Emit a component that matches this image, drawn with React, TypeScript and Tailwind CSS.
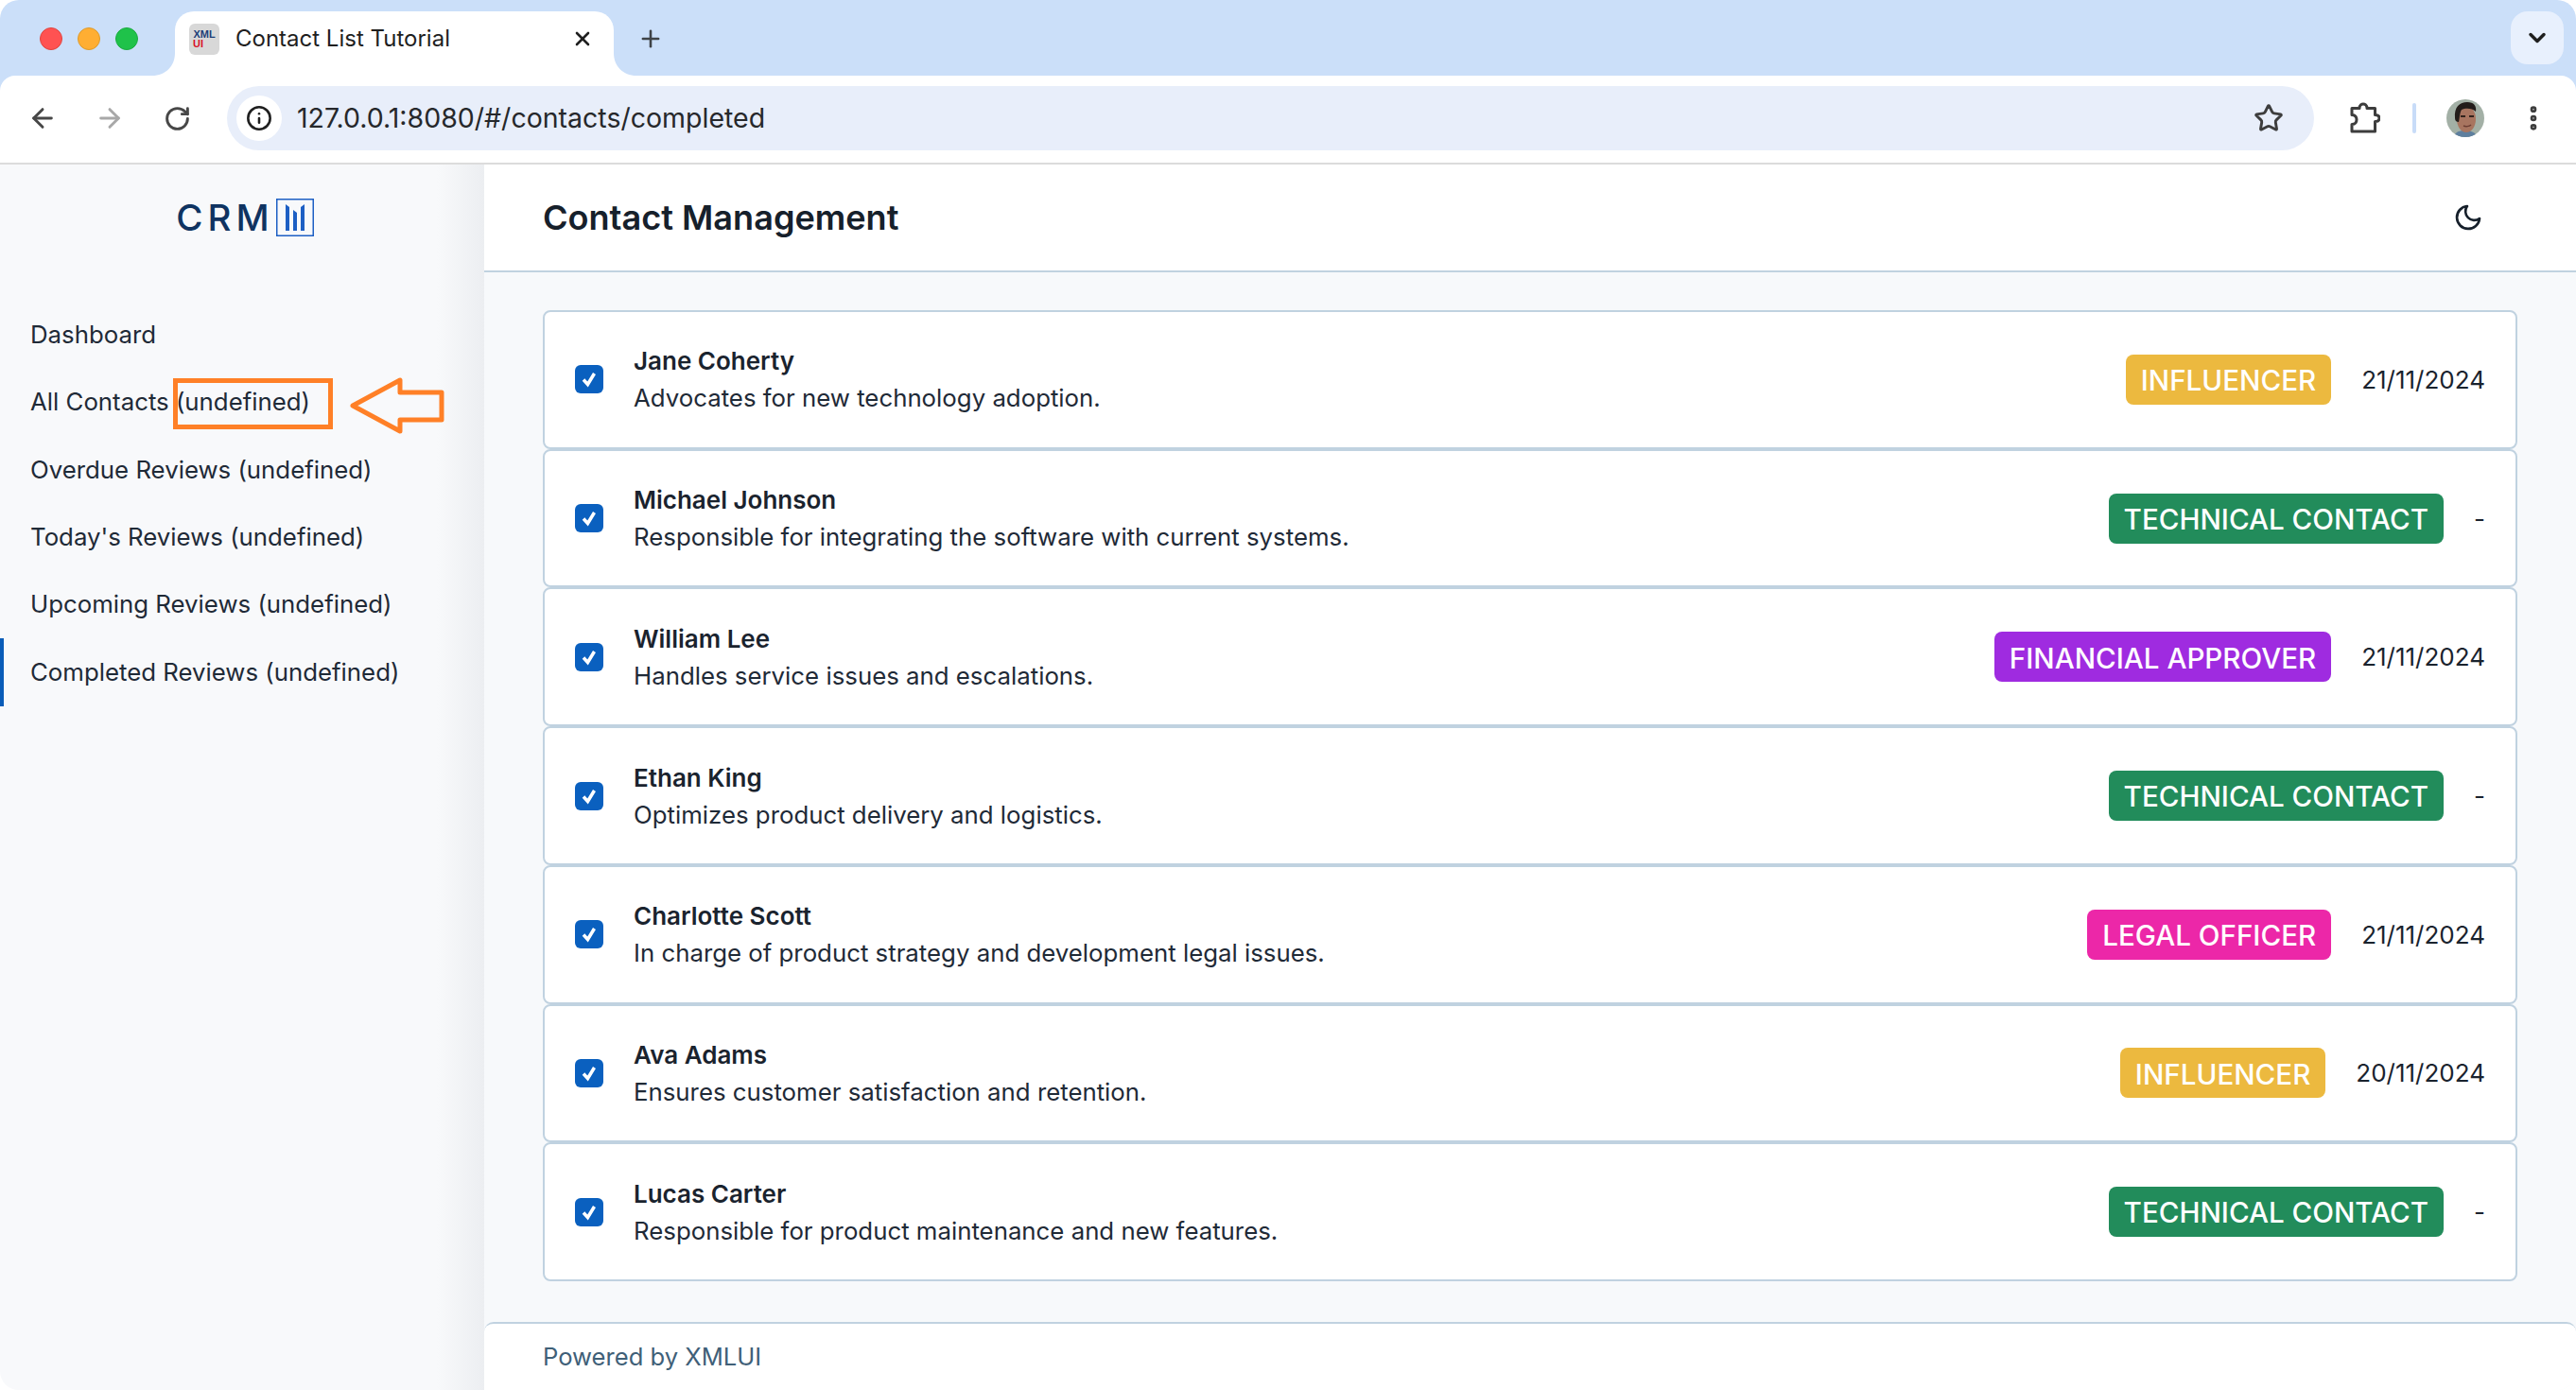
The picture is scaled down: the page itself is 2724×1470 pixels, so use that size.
import React from "react";
import { ArrowLeft, ArrowRight, RotateCw, Info, Star, EllipsisVertical, ChevronDown, X, Plus } from "lucide-react";

type Contact = {
  name: string;
  desc: string;
  tag: string;
  tagClass: string;
  date: string;
};

const contacts: Contact[] = [
  { name: "Jane Coherty", desc: "Advocates for new technology adoption.", tag: "INFLUENCER", tagClass: "bg-[#ecb93f]", date: "21/11/2024" },
  { name: "Michael Johnson", desc: "Responsible for integrating the software with current systems.", tag: "TECHNICAL CONTACT", tagClass: "bg-[#228c5b]", date: "-" },
  { name: "William Lee", desc: "Handles service issues and escalations.", tag: "FINANCIAL APPROVER", tagClass: "bg-[#9f2be0]", date: "21/11/2024" },
  { name: "Ethan King", desc: "Optimizes product delivery and logistics.", tag: "TECHNICAL CONTACT", tagClass: "bg-[#228c5b]", date: "-" },
  { name: "Charlotte Scott", desc: "In charge of product strategy and development legal issues.", tag: "LEGAL OFFICER", tagClass: "bg-[#ec27a8]", date: "21/11/2024" },
  { name: "Ava Adams", desc: "Ensures customer satisfaction and retention.", tag: "INFLUENCER", tagClass: "bg-[#ecb93f]", date: "20/11/2024" },
  { name: "Lucas Carter", desc: "Responsible for product maintenance and new features.", tag: "TECHNICAL CONTACT", tagClass: "bg-[#228c5b]", date: "-" },
];

const navItems = [
  "Dashboard",
  "All Contacts (undefined)",
  "Overdue Reviews (undefined)",
  "Today's Reviews (undefined)",
  "Upcoming Reviews (undefined)",
  "Completed Reviews (undefined)",
];

function BrowserChrome() {
  return (
    <div className="bg-[#cbdff9] rounded-t-[20px] shrink-0">
      {/* Tab strip */}
      <div className="h-[80px] flex items-start pl-[42px] pr-[13px]">
        <div className="flex gap-[16px] mt-[29px]">
          <div className="w-[24px] h-[24px] rounded-full bg-[#ff5252] border border-[#e0443e]" />
          <div className="w-[24px] h-[24px] rounded-full bg-[#ffae33] border border-[#dd9a2b]" />
          <div className="w-[24px] h-[24px] rounded-full bg-[#1fc24a] border border-[#1aab3f]" />
        </div>
        <div className="relative ml-[39px] mt-[12px] w-[464px] h-[68px] bg-white rounded-t-[20px] flex items-center pl-[15px] pr-[21px] pb-[10px]">
          <svg className="absolute left-[-24px] bottom-0" width="24" height="24" viewBox="0 0 24 24">
            <path d="M24 0V24H0C14 24 24 14 24 0Z" fill="#fff" />
          </svg>
          <svg className="absolute right-[-24px] bottom-0" width="24" height="24" viewBox="0 0 24 24">
            <path d="M0 0V24H24C10 24 0 14 0 0Z" fill="#fff" />
          </svg>
          <div className="w-[32px] h-[33px] rounded-[6px] bg-[#d8d8d8] flex flex-col items-center justify-center font-['Liberation_Sans',sans-serif] font-bold text-[11px] leading-[10px]">
            <span className="text-[#1e3f78]">XML</span>
            <span className="text-[#d8112b] self-start pl-[4px]">UI</span>
          </div>
          <span className="ml-[17px] flex-1 text-[24px] text-[#1f1f1f]">Contact List Tutorial</span>
          <X size={24} strokeWidth={2.6} className="text-[#1f1f1f]" />
        </div>
        <Plus size={28} strokeWidth={2.2} className="ml-[25px] mt-[27px] text-[#3f4347]" />
        <div className="flex-1" />
        <div className="mt-[12px] w-[56px] h-[56px] rounded-[18px] bg-[#e8f0fd] flex items-center justify-center">
          <ChevronDown size={28} strokeWidth={3} className="text-[#1f1f1f]" />
        </div>
      </div>
      {/* Toolbar */}
      <div className="h-[94px] bg-white rounded-t-[16px] border-b-2 border-[#dcdcdc] flex items-center pl-[29px] pb-[2px]">
        <ArrowLeft size={32} strokeWidth={2.2} className="shrink-0 text-[#474747]" />
        <ArrowRight size={32} strokeWidth={2.2} className="shrink-0 ml-[39px] text-[#a8a8a8]" />
        <RotateCw size={29} strokeWidth={2.4} className="shrink-0 ml-[41px] text-[#474747]" />
        <div className="shrink-0 ml-[38px] w-[2207px] h-[68px] rounded-full bg-[#e8eefa] flex items-center pl-[10px] pr-[32px]">
          <div className="w-[48px] h-[48px] rounded-full bg-white flex items-center justify-center">
            <Info size={28} strokeWidth={2.2} className="text-[#1f1f1f]" />
          </div>
          <span className="ml-[16px] pt-[1px] flex-1 text-[28.5px] text-[#26282b]">127.0.0.1:8080/#/contacts/completed</span>
          <Star size={32} strokeWidth={2.2} className="text-[#3d3d3d]" />
        </div>
        <svg className="shrink-0 ml-[36px]" width="34" height="34" viewBox="0 0 34 34" fill="none">
          <path
            d="M4 6.5H12C12 3 14.5 2 16 2C17.5 2 20 3 20 6.5H28.5V13.5C32 13.5 33 15.500 33 17C33 18.500 32 20.500 28.500 20.500V31H4V23.500C8 23.500 9 20.500 9 18.500C9 16.500 8 13.500 4 13.500V6.500Z"
            stroke="#3d3d3d"
            strokeWidth="3"
            strokeLinejoin="round"
          />
        </svg>
        <div className="shrink-0 ml-[34px] w-[4px] h-[32px] rounded-full bg-[#c8dcf8]" />
        <svg className="shrink-0 ml-[32px]" width="40" height="40" viewBox="0 0 40 40">
          <clipPath id="avatar-clip">
            <circle cx="20" cy="20" r="20" />
          </clipPath>
          <g clipPath="url(#avatar-clip)">
            <rect width="40" height="40" fill="#a3b0a6" />
            <path d="M8 40C9 34 14 33 20 33C26 33 31 35 32 40Z" fill="#5e7f9e" />
            <ellipse cx="21" cy="21" rx="10" ry="14" fill="#a87560" />
            <path d="M9 20C8 8 14 3 22 3C29 3 32 7 31 13C27 9 20 9 16 11C14 14 14 20 13 24C11 24 9 23 9 20Z" fill="#231c1a" />
            <path d="M15 18H20M24 18H29" stroke="#32231d" strokeWidth="1.800" />
            <path d="M18 28C20 29 24 29 26 27" stroke="#6c3e33" strokeWidth="1.500" fill="none" />
          </g>
        </svg>
        <EllipsisVertical size={32} strokeWidth={3} className="shrink-0 ml-[36px] text-[#3d3d3d]" />
      </div>
    </div>
  );
}

function Logo() {
  return (
    <div className="flex items-center pl-[6px]">
      <span className="text-[38.5px] leading-none font-medium tracking-[5px] text-[#0f3361]">CRM</span>
      <svg className="ml-[2px]" width="40" height="40" viewBox="0 0 40 40" fill="none">
        <rect x="0.75" y="0.75" width="38.5" height="38.5" stroke="#1d5fc4" strokeWidth="1.5" />
        <path d="M10 6L14 9V34H10Z" fill="#1d5fc4" />
        <path d="M18 12L22 15V34H18Z" fill="#1d5fc4" />
        <path d="M26 9L30 6V34H26Z" fill="#1d5fc4" />
      </svg>
    </div>
  );
}

function Sidebar() {
  return (
    <div className="relative w-[512px] shrink-0 bg-[#f8f9fb]">
      <div className="h-[112px] flex items-center justify-center">
        <Logo />
      </div>
      <nav className="pt-[32.5px] flex flex-col">
        {navItems.map((item, i) => (
          <div
            key={item}
            className={
              i === navItems.length - 1
                ? "h-[71.4px] flex items-center pl-[28px] border-l-4 border-[#0a5cb8] text-[25.8px] text-[#1f2a37]"
                : "h-[71.4px] flex items-center pl-[32px] text-[25.8px] text-[#1f2a37]"
            }
          >
            {item}
          </div>
        ))}
      </nav>
      {/* shadow cast by the main panel */}
      <div className="absolute top-0 bottom-0 right-0 w-[50px] bg-linear-to-r from-transparent to-[#eceef1]" />
      {/* annotation over the "All Contacts" row */}
      <div className="absolute left-[183px] top-[226px] w-[169px] h-[54px] border-[5px] border-[#ff8027]" />
      <svg className="absolute left-[369px] top-[224px]" width="104" height="62" viewBox="0 0 104 62" fill="none">
        <path d="M4 31L54 4V17H98V46H54V58Z" stroke="#ff8027" strokeWidth="5" strokeLinejoin="round" />
      </svg>
    </div>
  );
}

function ContactRow({ contact }: { contact: Contact }) {
  return (
    <div className="flex-1 min-h-0 flex items-center bg-white border-2 border-[#c0d2e0] rounded-[8px] pl-[32px] pr-[32px]">
      <div className="w-[30px] h-[30px] rounded-[6px] bg-[#0a60bf] flex items-center justify-center">
        <svg width="30" height="30" viewBox="0 0 30 30" fill="none">
          <path d="M9 15.500L13.500 20.500L20.500 9" stroke="#fff" strokeWidth="3.500" />
        </svg>
      </div>
      <div className="ml-[32px] flex-1">
        <div className="text-[26px] leading-[39px] font-semibold text-[#1a232e]">{contact.name}</div>
        <div className="text-[25.8px] leading-[39px] text-[#1f2a37]">{contact.desc}</div>
      </div>
      <div className={`h-[53px] rounded-[8px] px-[16px] pt-[2px] flex items-center text-[29.6px] font-medium text-white ${contact.tagClass}`}>
        {contact.tag}
      </div>
      <div className="ml-[32px] text-[26px] text-[#1a232e]">{contact.date}</div>
    </div>
  );
}

export default function App() {
  return (
    <div className="w-[2724px] h-[1470px] overflow-hidden flex flex-col bg-white font-['Inter',sans-serif]">
      <BrowserChrome />
      <div className="flex-1 min-h-0 flex rounded-b-[20px] overflow-hidden">
        <Sidebar />
        <div className="flex-1 min-w-0 flex flex-col bg-[#f7f9fb]">
          <header className="h-[114px] shrink-0 bg-white border-b-2 border-[#c0d2e0] flex items-center justify-between pl-[62px] pr-[98px]">
            <h1 className="text-[36.1px] font-semibold text-[#16202b]">Contact Management</h1>
            <svg width="32" height="32" viewBox="0 0 24 24" fill="none" stroke="#16202b" strokeWidth="2" strokeLinecap="round" strokeLinejoin="round">
              <path d="M21 12.790A9 9 0 1 1 11.210 3 7 7 0 0 0 21 12.790Z" />
            </svg>
          </header>
          <div className="h-[1027px] shrink-0 mt-[40px] mx-[62px] flex flex-col">
            {contacts.map((c) => (
              <ContactRow key={c.name} contact={c} />
            ))}
          </div>
          <footer className="mt-[43px] flex-1 bg-white border-t-2 border-[#c0d2e0] rounded-t-[10px] flex items-center pl-[62px] text-[25.6px] text-[#3f6078]">
            Powered by XMLUI
          </footer>
        </div>
      </div>
    </div>
  );
}
